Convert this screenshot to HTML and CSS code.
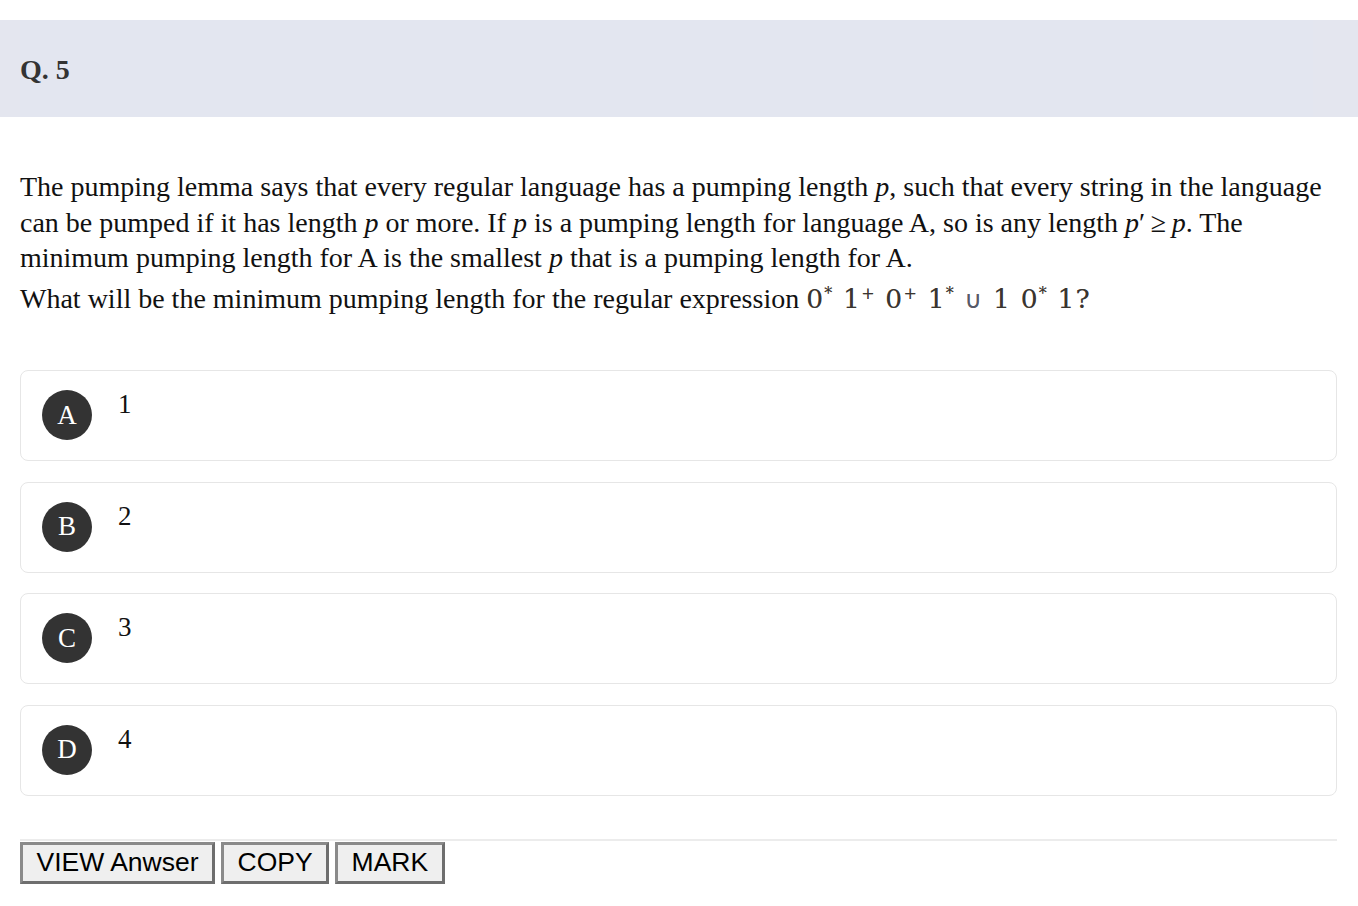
FILE: index.html
```html
<!DOCTYPE html>
<html>
<head>
<meta charset="utf-8">
<link rel="stylesheet" href="styles.css">
</head>
<body>
<div class="page">
  <div class="qhead"><div class="qhead-inner"><h2 class="qnum">Q. 5</h2></div></div>
  <div class="question">
    <p class="qtext">The pumping lemma says that every regular language has a pumping length <i>p</i>, such that every string in the language can be pumped if it has length <i>p</i> or more. If <i>p</i> is a pumping length for language A, so is any length <i>p</i>′&#8201;≥&#8201;<i>p</i>. The minimum pumping length for A is the smallest <i>p</i> that is a pumping length for A.</p>
    <p class="qtext qlast">What will be the minimum pumping length for the regular expression <span class="formula">0<sup>*</sup> 1<sup>+</sup> 0<sup>+</sup> 1<sup>*</sup> <span class="cup">∪</span> 1 0<sup>*</sup> 1?</span></p>
  </div>
  <div class="options">
    <div class="option"><span class="badge">A</span><span class="otext">1</span></div>
    <div class="option"><span class="badge">B</span><span class="otext">2</span></div>
    <div class="option"><span class="badge">C</span><span class="otext">3</span></div>
    <div class="option"><span class="badge">D</span><span class="otext">4</span></div>
  </div>
  <div class="actions">
    <button class="btn">VIEW Anwser</button>
    <button class="btn">COPY</button>
    <button class="btn">MARK</button>
  </div>
</div>
</body>
</html>
```
FILE: styles.css
```css
html, body {
  margin: 0;
  padding: 0;
  background: #ffffff;
}
body {
  font-family: "Liberation Serif", "Times New Roman", serif;
  color: #111;
}
.page {
  padding-top: 20px;
}
.qhead {
  background: #e4e6ef;
}
.qhead-inner {
  margin: 0 45px 0 20px;
  background: #e3e6f0;
  height: 97px;
  display: flex;
  align-items: center;
}
.qnum {
  margin: 0;
  font-size: 28px;
  font-weight: bold;
  color: #333;
  position: relative;
  top: 1px;
}
.question {
  padding: 52px 21px 0 20px;
}
.qtext {
  margin: 0;
  font-size: 28px;
  line-height: 35.5px;
  color: #111;
}
.qlast {
  margin-top: 5px;
}
.formula {
  font-family: "DejaVu Serif", serif;
  color: #3a3530;
  font-size: 26.5px;
  letter-spacing: 1.2px;
  text-shadow: 0 0 0.6px rgba(60, 40, 20, 0.5);
}
.formula sup {
  font-size: 16px;
  vertical-align: 9px;
  line-height: 0;
}
.cup {
  color: #555a6a;
  font-family: "DejaVu Sans", sans-serif;
  font-size: 24px;
}
.options {
  padding: 52px 21px 0 20px;
  display: flex;
  flex-direction: column;
  gap: 20.5px;
}
.option {
  border: 1px solid #e6e6e6;
  border-radius: 8px;
  padding: 19px 21px 20px 21px;
  display: flex;
  align-items: flex-start;
  background: #fff;
}
.badge {
  width: 50px;
  height: 50px;
  border-radius: 50%;
  background: #333333;
  color: #fff;
  font-size: 27px;
  display: flex;
  align-items: center;
  justify-content: center;
  flex-shrink: 0;
}
.otext {
  margin-left: 26px;
  font-size: 27px;
  line-height: 30px;
  position: relative;
  top: -1px;
  color: #111;
}
.actions {
  margin: 43px 21px 0 20px;
  border-top: 2px solid #ececec;
  display: flex;
  gap: 6px;
  padding-top: 1px;
  padding-bottom: 20px;
}
.btn {
  font-family: "Liberation Sans", Arial, sans-serif;
  font-size: 26.5px;
  color: #000;
  background: #efefef;
  border: 3px solid #7a7a7a;
  border-color: #8a8a8a #6e6e6e #6e6e6e #8a8a8a;
  height: 42px;
  padding: 0 13.5px;
  margin: 0;
  line-height: 1;
}
```
